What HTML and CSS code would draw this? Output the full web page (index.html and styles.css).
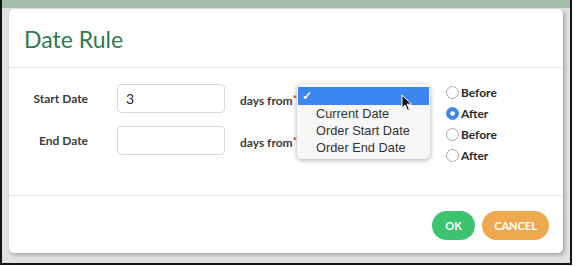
FILE: index.html
```html
<!DOCTYPE html>
<html lang="en">
<head>
    <meta charset="UTF-8">
    <meta name="viewport" content="width=device-width, initial-scale=1.0">
    <title>Date Rule</title>
    <link rel="stylesheet" href="styles.css">
</head>
<body>

<div class="pantalla">
    <div class="modal">
        <div class="cabecera">
            <h2>Date Rule</h2>
        </div>

        <div class="cuerpo">
            <div class="fila">
                <label class="etiqueta">Start Date</label>
                <div class="campo">3</div>
                <span class="dias">days from<span class="req">*</span></span>
                <div class="selector">
                    <!-- menu abierto encima del select -->
                    <div class="menu">
                        <div class="opcion activa"><span class="check">&#10003;</span></div>
                        <div class="opcion">Current Date</div>
                        <div class="opcion">Order Start Date</div>
                        <div class="opcion">Order End Date</div>
                        <svg class="cursor" width="12" height="18" viewBox="0 0 12 18">
                            <path d="M1 1 L1 14 L4 11 L6.5 16.5 L8.5 15.6 L6 10.2 L10.5 10.2 Z" fill="#111" stroke="#fff" stroke-width="1"/>
                        </svg>
                    </div>
                </div>
                <div class="radios">
                    <div class="radio"><span class="circulo"></span>Before</div>
                    <div class="radio"><span class="circulo marcado"></span>After</div>
                </div>
            </div>

            <div class="fila">
                <label class="etiqueta">End Date</label>
                <div class="campo"></div>
                <span class="dias">days from<span class="req">*</span></span>
                <div class="selector"></div>
                <div class="radios">
                    <div class="radio"><span class="circulo"></span>Before</div>
                    <div class="radio"><span class="circulo"></span>After</div>
                </div>
            </div>
        </div>

        <div class="pie">
            <button class="boton ok">OK</button>
            <button class="boton cancelar">CANCEL</button>
        </div>
    </div>
</div>

</body>
</html>
```

FILE: styles.css
```css
body {
    margin: 0;
    background: #fff;
    font-family: Lato, "Open Sans", sans-serif;
}

.pantalla {
    width: 572px;
    height: 265px;
    box-sizing: border-box;
    border-left: 2px solid #151515;
    border-right: 2px solid #151515;
    border-bottom: 2px solid #151515;
    padding: 9px 0 0 7px;
    background: linear-gradient(#a5bfab 0, #a5bfab 8px, #dfe2df 8px);
}

.modal {
    width: 554px;
    height: 244px;
    background: #fff;
    border-radius: 5px;
    box-shadow: 2px 2px 4px rgba(0, 0, 0, 0.28);
}

.cabecera {
    height: 58px;
    border-bottom: 1px solid #e6e6e6;
    padding-left: 15px;
}

.cabecera h2 {
    margin: 0;
    padding-top: 16px;
    font-size: 23px;
    font-weight: 400;
    color: #2f7a52;
}

.cuerpo {
    height: 128px;
    box-sizing: border-box;
    padding-top: 14px;
    border-bottom: 1px solid #e6e6e6;
}

.fila {
    display: flex;
    align-items: flex-start;
    height: 42px;
}

.etiqueta {
    width: 79px;
    text-align: right;
    font-size: 12px;
    font-weight: 700;
    color: #3a3a3a;
    line-height: 33px;
}

.campo {
    margin-left: 29px;
    margin-top: 2px;
    width: 108px;
    height: 29px;
    box-sizing: border-box;
    border: 1px solid #d9d9d9;
    border-radius: 4px;
    padding-left: 8px;
    font-size: 14px;
    line-height: 28px;
    color: #222;
}

.dias {
    margin-left: 15px;
    font-size: 12px;
    font-weight: 700;
    color: #3a3a3a;
    line-height: 33px;
}

.req {
    color: #d0312d;
    font-size: 10px;
    vertical-align: 3px;
}

.selector {
    position: relative;
    width: 149px;
    height: 33px;
}

.menu {
    position: absolute;
    left: 0;
    top: 2px;
    width: 133px;
    padding: 3px 0;
    background: #f7f7f7;
    border-radius: 5px;
    box-shadow: 0 1px 5px rgba(0, 0, 0, 0.35);
    font-family: "Liberation Sans", Arial, sans-serif;
    font-size: 12.8px;
    color: #333;
    z-index: 2;
}

.opcion {
    height: 17px;
    line-height: 17px;
    padding-left: 19px;
}

.opcion.activa {
    height: 18px;
    line-height: 18px;
    margin: 0 1px;
    background: #3b86ef;
    padding-left: 4px;
    color: #fff;
}

.check {
    font-size: 12px;
    font-weight: 700;
}

.cursor {
    position: absolute;
    left: 104px;
    top: 10px;
}

.radio {
    display: flex;
    align-items: center;
    height: 21px;
    font-size: 12px;
    font-weight: 700;
    color: #2a2a2a;
}

.circulo {
    width: 11px;
    height: 11px;
    border: 1px solid #a8a8a8;
    border-radius: 50%;
    margin-right: 2px;
    background: #fff;
    box-sizing: content-box;
}

.circulo.marcado {
    border-color: #3b86ef;
    background: radial-gradient(circle, #fff 0, #fff 2px, #3b86ef 2.5px);
}

.pie {
    display: flex;
    justify-content: flex-end;
    gap: 7px;
    padding: 15px 14px 0 0;
}

.boton {
    height: 29px;
    border: none;
    border-radius: 15px;
    color: #fff;
    font-family: Lato, sans-serif;
    font-size: 11px;
    font-weight: 700;
    padding: 0;
}

.ok {
    width: 43px;
    background: #3cc370;
}

.cancelar {
    width: 67px;
    background: #eea94f;
}
```
